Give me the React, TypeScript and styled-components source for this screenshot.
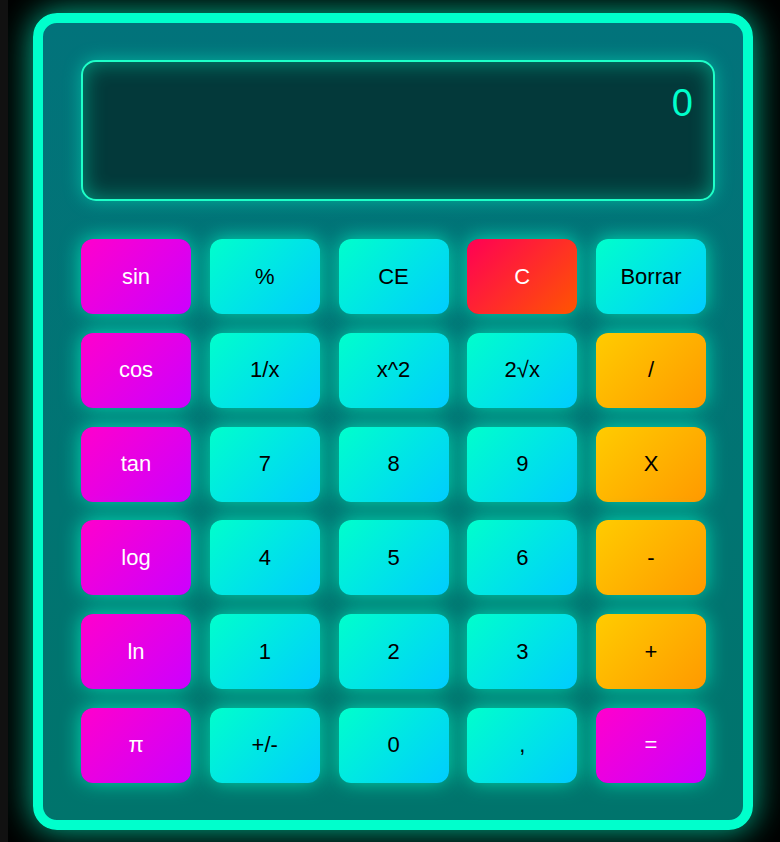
import React from "react";
import styled, { createGlobalStyle } from "styled-components";

const Global = createGlobalStyle`
  html { background: #111111; }
  body {
    margin: 0 0 0 8px;
    background: #111111;
    font-family: "Liberation Sans", Arial, sans-serif;
    overflow: hidden;
  }
`;

const Stage = styled.div`
  background: #000;
  min-height: 842px;
  padding: 13px 0 0 25px;
  box-sizing: border-box;
`;

const Calculator = styled.div`
  width: 720px;
  height: 817px;
  box-sizing: border-box;
  border: 10px solid #00ffcc;
  border-radius: 24px;
  background: linear-gradient(180deg, #02737b 0%, #017472 60%, #00746c 100%);
  box-shadow: 0 0 30px rgba(0, 255, 204, 0.65), 0 0 60px rgba(0, 255, 204, 0.15);
  padding: 37px 28px 37px 38px;
  display: flex;
  flex-direction: column;
  gap: 38px;
`;

const Display = styled.div`
  height: 141px;
  box-sizing: border-box;
  border: 2px solid #1effc8;
  border-radius: 15px;
  background: #03393a;
  box-shadow: inset 0 0 22px rgba(0, 255, 204, 0.45), 0 0 18px rgba(0, 255, 204, 0.45);
  display: flex;
  justify-content: flex-end;
  align-items: flex-start;
  padding: 22px 20px 0 0;
  color: #00ffcc;
  font-size: 38px;
  line-height: 1;
`;

const Keys = styled.div`
  display: grid;
  grid-template-columns: repeat(5, 110px);
  grid-auto-rows: 75px;
  column-gap: 18.75px;
  row-gap: 18.75px;
`;

type Kind = "fn" | "num" | "clear" | "op" | "eq";

const palette: Record<Kind, { bg: string; fg: string }> = {
  fn: { bg: "linear-gradient(135deg, #ff00cc, #cc00ff)", fg: "#ffffff" },
  eq: { bg: "linear-gradient(135deg, #ff00cc, #cc00ff)", fg: "#ffffff" },
  num: { bg: "linear-gradient(135deg, #00ffcc, #00ccff)", fg: "#000000" },
  clear: { bg: "linear-gradient(135deg, #ff0055, #ff5500)", fg: "#ffffff" },
  op: { bg: "linear-gradient(135deg, #ffcc00, #ff9900)", fg: "#000000" },
};

const Key = styled.button<{ $kind: Kind }>`
  border: none;
  border-radius: 12px;
  background: ${(p) => palette[p.$kind].bg};
  color: ${(p) => palette[p.$kind].fg};
  font-family: "Liberation Sans", Arial, sans-serif;
  font-size: 22px;
  padding: 0;
  display: flex;
  align-items: center;
  justify-content: center;
  box-shadow: 0 0 20px rgba(0, 255, 204, 0.8), 0 6px 14px rgba(0, 0, 0, 0.12);
  cursor: pointer;
`;

const rows: [string, Kind][][] = [
  [["sin", "fn"], ["%", "num"], ["CE", "num"], ["C", "clear"], ["Borrar", "num"]],
  [["cos", "fn"], ["1/x", "num"], ["x^2", "num"], ["2√x", "num"], ["/", "op"]],
  [["tan", "fn"], ["7", "num"], ["8", "num"], ["9", "num"], ["X", "op"]],
  [["log", "fn"], ["4", "num"], ["5", "num"], ["6", "num"], ["-", "op"]],
  [["ln", "fn"], ["1", "num"], ["2", "num"], ["3", "num"], ["+", "op"]],
  [["π", "fn"], ["+/-", "num"], ["0", "num"], [",", "num"], ["=", "eq"]],
];

export default function App() {
  return (
    <>
      <Global />
      <Stage>
        <Calculator>
          <Display>0</Display>
          <Keys>
            {rows.flat().map(([label, kind], i) => (
              <Key key={i} $kind={kind}>
                {label}
              </Key>
            ))}
          </Keys>
        </Calculator>
      </Stage>
    </>
  );
}
